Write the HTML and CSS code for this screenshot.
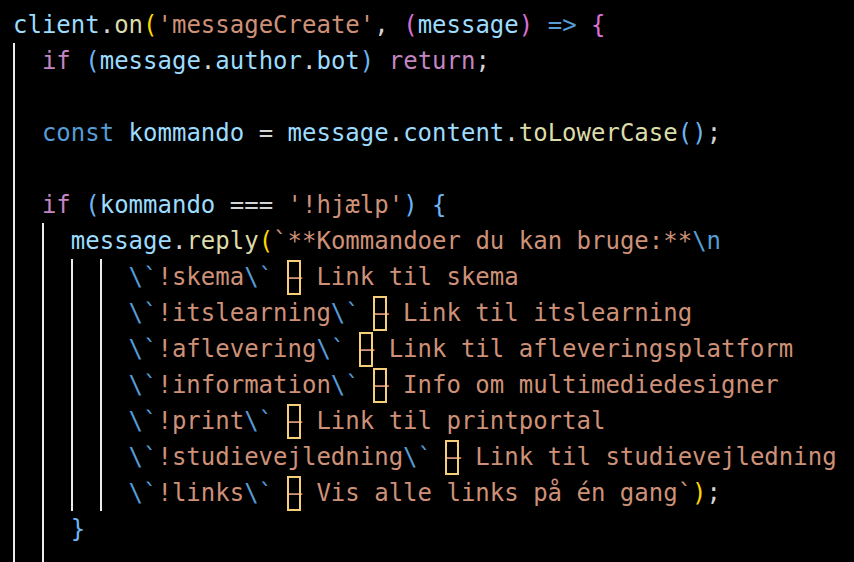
FILE: index.html
```html
<!DOCTYPE html>
<html lang="da">
<head>
<meta charset="utf-8">
<title>Kode</title>
<link rel="stylesheet" href="styles.css">
</head>
<body>
<div class="editor">
<div class="ln"><span class="v">client</span><span class="p">.</span><span class="f">on</span><span class="b1">(</span><span class="s">'messageCreate'</span><span class="p">, </span><span class="b2">(</span><span class="v">message</span><span class="b2">)</span> <span class="k">=&gt;</span> <span class="b2">{</span></div>
<div class="ln"><span class="g"></span><span class="c">if</span> <span class="b3">(</span><span class="v">message</span><span class="p">.</span><span class="v">author</span><span class="p">.</span><span class="v">bot</span><span class="b3">)</span> <span class="c">return</span><span class="p">;</span></div>
<div class="ln"><span class="g"></span></div>
<div class="ln"><span class="g"></span><span class="k">const</span> <span class="v">kommando</span> <span class="p">=</span> <span class="v">message</span><span class="p">.</span><span class="v">content</span><span class="p">.</span><span class="f">toLowerCase</span><span class="b3">()</span><span class="p">;</span></div>
<div class="ln"><span class="g"></span></div>
<div class="ln"><span class="g"></span><span class="c">if</span> <span class="b3">(</span><span class="v">kommando</span> <span class="p">===</span> <span class="s">'!hjælp'</span><span class="b3">)</span> <span class="b3">{</span></div>
<div class="ln"><span class="g"></span><span class="g"></span><span class="v">message</span><span class="p">.</span><span class="f">reply</span><span class="b1">(</span><span class="s">`**Kommandoer du kan bruge:**</span><span class="e">\n</span></div>
<div class="ln"><span class="g"></span><span class="g"></span><span class="g"></span><span class="g"></span><span class="e">\`</span><span class="s">!skema</span><span class="e">\`</span><span class="s"> </span><span class="uc s">—</span><span class="s"> Link til skema</span></div>
<div class="ln"><span class="g"></span><span class="g"></span><span class="g"></span><span class="g"></span><span class="e">\`</span><span class="s">!itslearning</span><span class="e">\`</span><span class="s"> </span><span class="uc s">—</span><span class="s"> Link til itslearning</span></div>
<div class="ln"><span class="g"></span><span class="g"></span><span class="g"></span><span class="g"></span><span class="e">\`</span><span class="s">!aflevering</span><span class="e">\`</span><span class="s"> </span><span class="uc s">—</span><span class="s"> Link til afleveringsplatform</span></div>
<div class="ln"><span class="g"></span><span class="g"></span><span class="g"></span><span class="g"></span><span class="e">\`</span><span class="s">!information</span><span class="e">\`</span><span class="s"> </span><span class="uc s">—</span><span class="s"> Info om multimediedesigner</span></div>
<div class="ln"><span class="g"></span><span class="g"></span><span class="g"></span><span class="g"></span><span class="e">\`</span><span class="s">!print</span><span class="e">\`</span><span class="s"> </span><span class="uc s">—</span><span class="s"> Link til printportal</span></div>
<div class="ln"><span class="g"></span><span class="g"></span><span class="g"></span><span class="g"></span><span class="e">\`</span><span class="s">!studievejledning</span><span class="e">\`</span><span class="s"> </span><span class="uc s">—</span><span class="s"> Link til studievejledning</span></div>
<div class="ln"><span class="g"></span><span class="g"></span><span class="g"></span><span class="g"></span><span class="e">\`</span><span class="s">!links</span><span class="e">\`</span><span class="s"> </span><span class="uc s">—</span><span class="s"> Vis alle links på én gang`</span><span class="b1">)</span><span class="p">;</span></div>
<div class="ln"><span class="g"></span><span class="g"></span><span class="b3">}</span></div>
<div class="ln"><span class="g"></span><span class="g"></span></div>
</div>
</body>
</html>
```
FILE: styles.css
```css
html, body {
  margin: 0;
  padding: 0;
  background: #000;
}

body {
  width: 854px;
  height: 562px;
  overflow: hidden;
}

.editor {
  padding: 7px 0 0 13px;
  font-family: "DejaVu Sans Mono", "Liberation Mono", monospace;
  font-size: 24px;
  color: #d4d4d4;
}

.ln {
  height: 36px;
  line-height: 36px;
  white-space: pre;
}

.g {
  display: inline-block;
  width: 2ch;
  height: 36px;
  vertical-align: top;
  box-sizing: border-box;
  border-left: 2px solid #ececec;
}

.v { color: #9cdcfe; }
.f { color: #dcdcaa; }
.s { color: #ce9178; }
.c { color: #c586c0; }
.k { color: #569cd6; }
.p { color: #d4d4d4; }
.e { color: #569cd6; }
.b1 { color: #ffd700; }
.b2 { color: #da70d6; }
.b3 { color: #6cb4f2; }

.uc {
  position: relative;
  display: inline-block;
  width: 1ch;
  height: 36px;
  vertical-align: top;
}

.uc::after {
  content: "";
  position: absolute;
  left: -1px;
  top: 1px;
  width: 14px;
  height: 35px;
  box-sizing: border-box;
  border: 2px solid #f4cf78;
}
```
